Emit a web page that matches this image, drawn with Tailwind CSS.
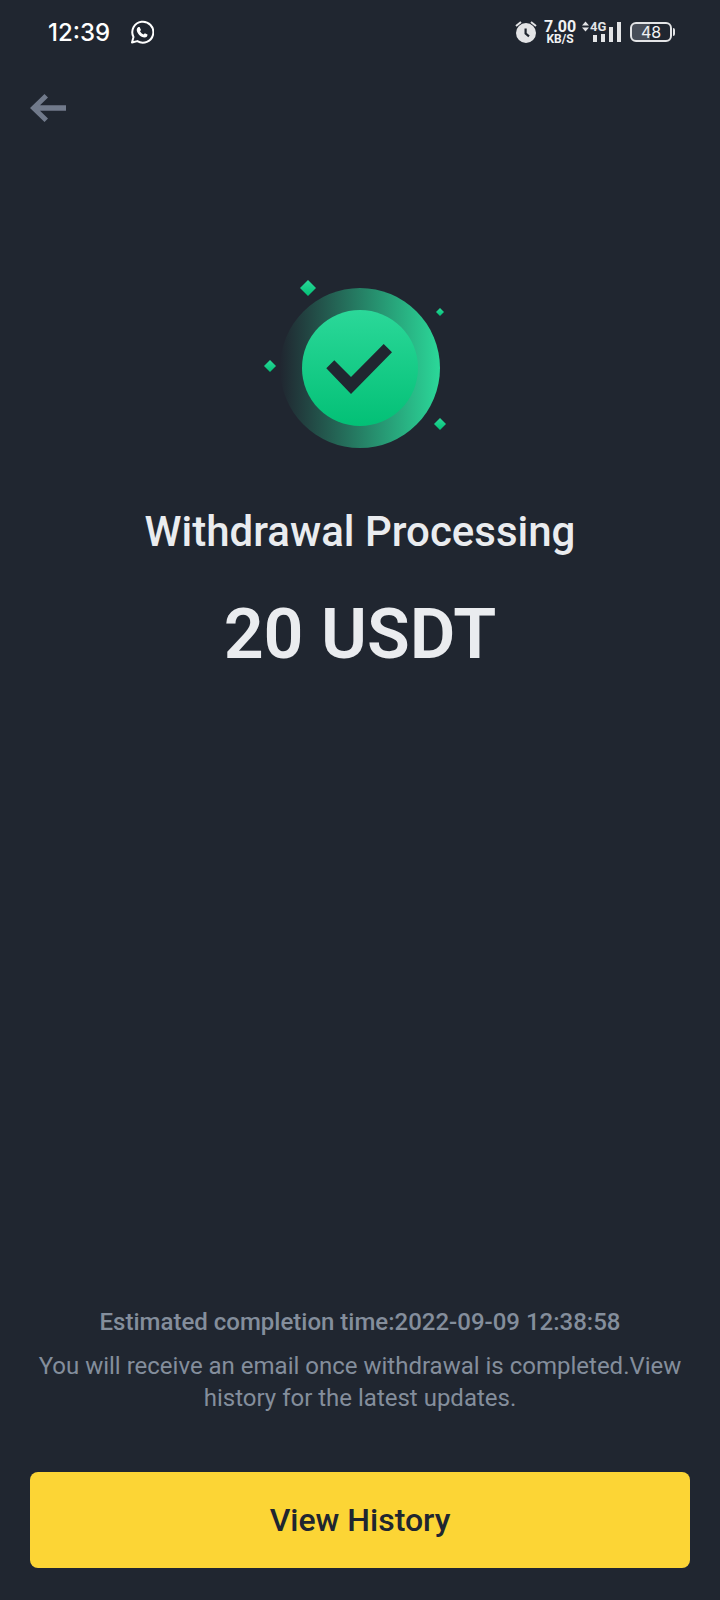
<!DOCTYPE html>
<html lang="en">
<head>
<meta charset="utf-8">
<meta name="viewport" content="width=device-width, initial-scale=1">
<title>Withdrawal Processing</title>
<script src="https://cdn.jsdelivr.net/npm/@tailwindcss/browser@4"></script>
</head>
<body class="flex min-h-screen flex-col bg-[#202630] font-['Roboto',sans-serif] text-[#eaecef]">
  <div class="flex h-16 items-center justify-between pl-12 pr-[45px] font-['Inter',sans-serif] text-[#f1f2f4]">
    <div class="flex items-center gap-5">
      <time class="pt-0.5 text-2xl font-medium text-white">12:39</time>
      <svg class="h-6 w-6" viewBox="0 0 24 24" fill="none" role="img" aria-label="WhatsApp">
        <path d="M2 22.500 3.500 17A10.500 10.500 0 1 1 7.300 21.100Z" stroke="white" stroke-width="2" stroke-linejoin="round"/>
        <path d="M8.300 7 9.600 6.900 11 9.900 10 11.300Q11.200 13.500 13.500 14.400L14.900 13.200 17.500 14.600Q17.500 17.500 14.600 17.500C10.500 17.200 7 13.200 6.700 9.900Q6.700 8.100 8.300 7Z" fill="white"/>
      </svg>
    </div>
    <div class="flex items-center">
      <svg class="h-6 w-6" viewBox="0 0 24 24" fill="#e3e4e6" role="img" aria-label="Alarm">
        <path fill-rule="evenodd" d="M12 3a10 10 0 1 0 0 20 10 10 0 0 0 0-20ZM10.500 8.500h2.200v4.600l3 2.400-1.400 1.700-3.800-3.100Z"/>
        <path d="M2 6 7 2M22 6 17 2" stroke="#e3e4e6" stroke-width="2"/>
      </svg>
      <div class="ml-1.5 w-8 pt-0.5 text-center font-['Roboto',sans-serif] font-bold">
        <div class="text-base leading-3">7.00</div>
        <div class="text-xs leading-3">KB/S</div>
      </div>
      <svg class="ml-1.5 h-6 w-10" viewBox="0 0 40 24" fill="#e3e4e6" role="img" aria-label="4G signal">
        <path d="M0 5.500 3.500 1.500 7 5.500ZM0 7.500h7l-3.500 4Z"/>
        <path d="M11 15h4v7h-4zM19 14h4v8h-4zM27 7h4v15h-4zM35 2h4v20h-4z"/>
        <text x="8" y="11" font-family="Roboto, sans-serif" font-size="13" font-weight="700">4G</text>
      </svg>
      <div class="ml-2 flex items-center gap-px" role="img" aria-label="Battery 48 percent">
        <div class="flex h-5 w-[42px] items-center justify-center rounded-md border-2 border-[#e3e4e6] bg-linear-to-r from-[#484e59] from-48% to-transparent to-48% text-base">48</div>
        <div class="h-2 w-0.5 rounded-r bg-[#e3e4e6]"></div>
      </div>
    </div>
  </div>

  <header class="flex h-[88px] items-center px-7">
    <button type="button" class="flex h-10 w-10 items-center justify-center" aria-label="Back">
      <svg class="h-7 w-9" viewBox="0 0 36 28" fill="#717a8b"><path d="M0 14 14.500 0 18 3.500 10 11.200H36v5.500H10L18 24.500 14.500 28Z"/></svg>
    </button>
  </header>

  <main class="flex flex-1 flex-col items-center px-[30px] pb-8 pt-[118px] text-center">
    <svg class="h-[190px] w-[200px]" viewBox="0 0 200 190" role="img" aria-label="Success">
      <defs>
        <linearGradient id="ring" x1="0" x2="1" y1="0" y2="0"><stop offset="0" stop-color="#2bd899" stop-opacity="0"/><stop offset="1" stop-color="#2bd899"/></linearGradient>
        <linearGradient id="disc" x1="0" x2="0" y1="0" y2="1"><stop offset="0" stop-color="#2bd899"/><stop offset="1" stop-color="#03c076"/></linearGradient>
      </defs>
      <circle cx="100" cy="98" r="80" fill="url(#ring)"/>
      <circle cx="100" cy="98" r="58" fill="url(#disc)"/>
      <path d="M66.300 98.300 74.300 90.300 91 107 123.700 74 132 82.300 91 124Z" fill="#202630"/>
      <g fill="url(#disc)">
        <path d="M48 10l8 8-8 8-8-8Z"/>
        <path d="M180 38l4 4-4 4-4-4Z"/>
        <path d="M10 90l6 6-6 6-6-6Z"/>
        <path d="M180 148l6 6-6 6-6-6Z"/>
      </g>
    </svg>
    <h1 class="mt-12 text-[42px] font-medium leading-12">Withdrawal Processing</h1>
    <p class="mt-[38px] text-[70px] font-semibold leading-20">20 USDT</p>
    <p class="mt-auto text-2xl font-medium leading-8 text-[#848e9c]">Estimated completion time:2022-09-09 12:38:58</p>
    <p class="mt-3 text-2xl leading-8 text-[#848e9c]">You will receive an email once withdrawal is completed.View history for the latest updates.</p>
    <button type="button" class="mt-[58px] h-24 w-full rounded-lg bg-[#fcd535] text-[32px] font-medium text-[#202630]">View History</button>
  </main>
</body>
</html>
